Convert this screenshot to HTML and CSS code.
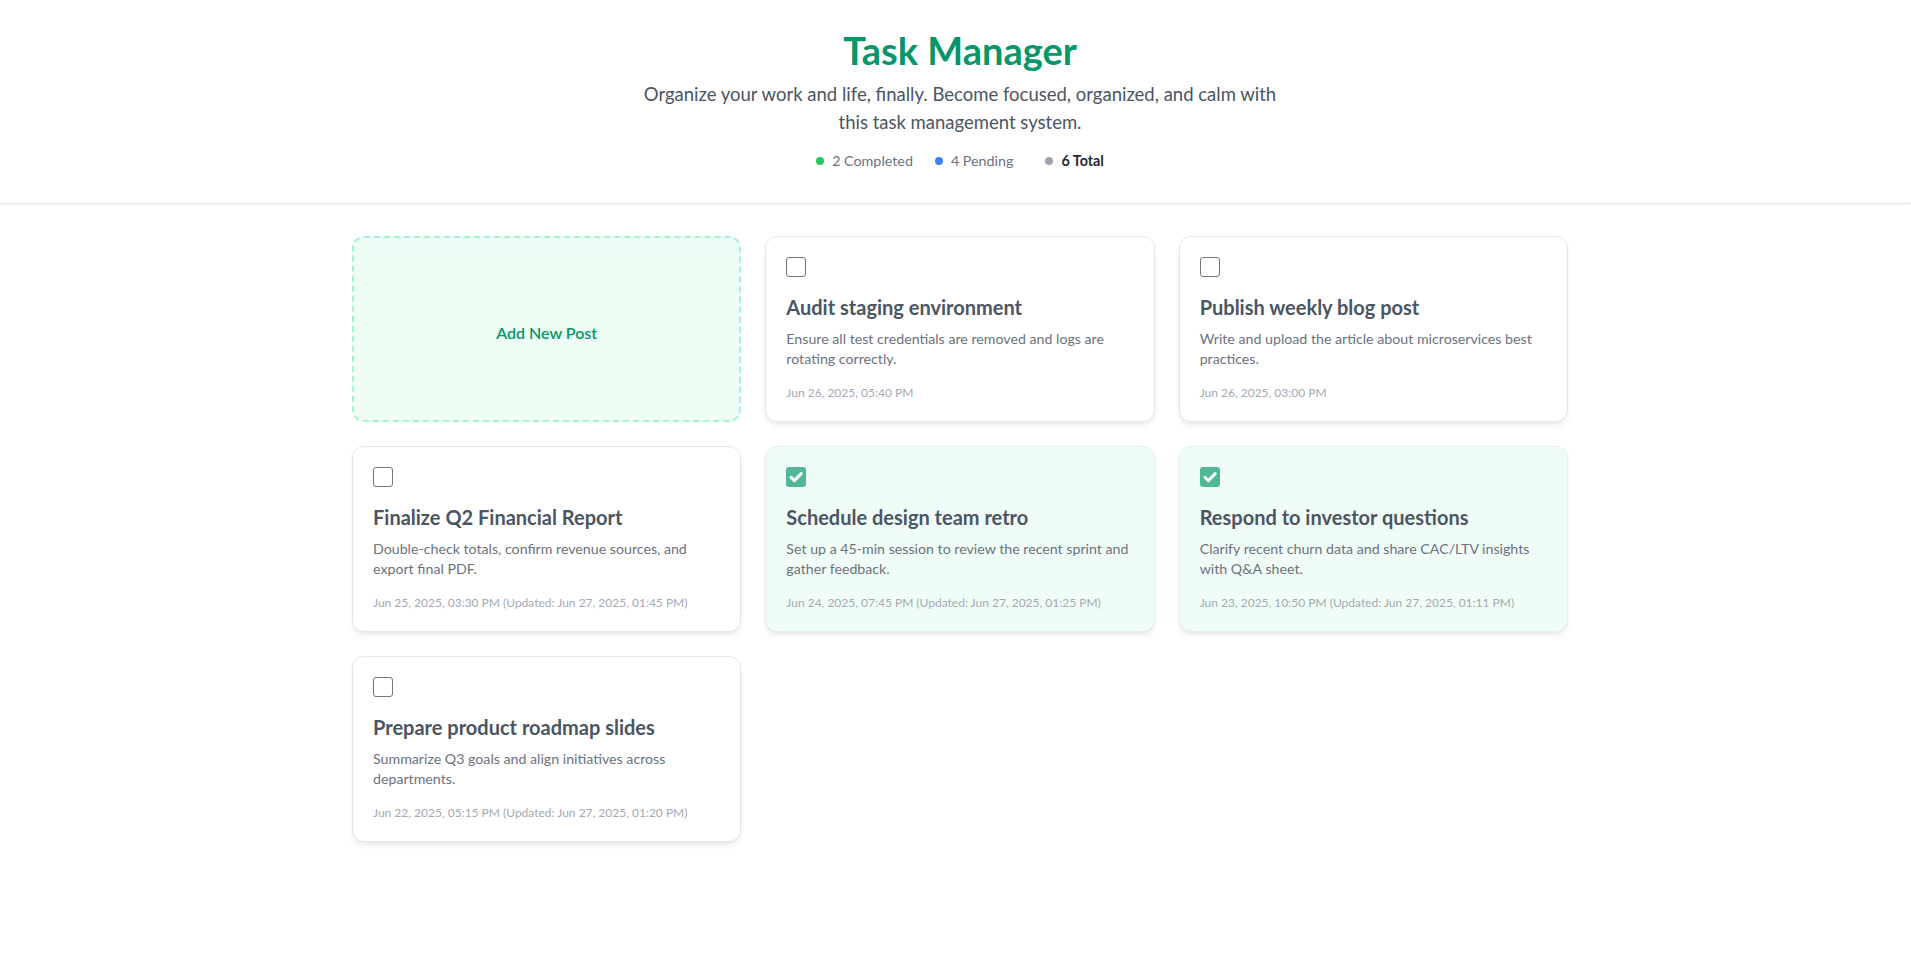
FILE: index.html
```html
<!DOCTYPE html>
<html lang="en">
<head>
<meta charset="utf-8">
<title>Task Manager</title>
<link rel="stylesheet" href="styles.css">
</head>
<body>
<header class="header">
  <div class="header-inner">
    <h1 class="title">Task Manager</h1>
    <p class="subtitle">Organize your work and life, finally. Become focused, organized, and calm with this task management system.</p>
    <div class="stats">
      <span class="stat"><span class="dot dot-green"></span>2 Completed</span>
      <span class="stat"><span class="dot dot-blue"></span>4 Pending</span>
      <span class="stat stat-total"><span class="dot dot-gray"></span>6 Total</span>
    </div>
  </div>
</header>
<main class="main">
  <div class="grid">
    <button class="add-card">Add New Post</button>

    <article class="card">
      <span class="check"></span>
      <h2 class="card-title">Audit staging environment</h2>
      <p class="card-desc">Ensure all test credentials are removed and logs are rotating correctly.</p>
      <p class="card-date">Jun 26, 2025, 05:40 PM</p>
    </article>

    <article class="card">
      <span class="check"></span>
      <h2 class="card-title">Publish weekly blog post</h2>
      <p class="card-desc">Write and upload the article about microservices best practices.</p>
      <p class="card-date">Jun 26, 2025, 03:00 PM</p>
    </article>

    <article class="card">
      <span class="check"></span>
      <h2 class="card-title">Finalize Q2 Financial Report</h2>
      <p class="card-desc">Double-check totals, confirm revenue sources, and export final PDF.</p>
      <p class="card-date">Jun 25, 2025, 03:30 PM (Updated: Jun 27, 2025, 01:45 PM)</p>
    </article>

    <article class="card card-done">
      <span class="check check-on"><svg viewBox="0 0 20 20" width="20" height="20"><path d="M5 10.3l3.3 3.3L15.2 6.6" fill="none" stroke="#fff" stroke-width="3" stroke-linecap="round" stroke-linejoin="round"/></svg></span>
      <h2 class="card-title">Schedule design team retro</h2>
      <p class="card-desc">Set up a 45-min session to review the recent sprint and gather feedback.</p>
      <p class="card-date">Jun 24, 2025, 07:45 PM (Updated: Jun 27, 2025, 01:25 PM)</p>
    </article>

    <article class="card card-done">
      <span class="check check-on"><svg viewBox="0 0 20 20" width="20" height="20"><path d="M5 10.3l3.3 3.3L15.2 6.6" fill="none" stroke="#fff" stroke-width="3" stroke-linecap="round" stroke-linejoin="round"/></svg></span>
      <h2 class="card-title">Respond to investor questions</h2>
      <p class="card-desc">Clarify recent churn data and share CAC/LTV insights with Q&amp;A sheet.</p>
      <p class="card-date">Jun 23, 2025, 10:50 PM (Updated: Jun 27, 2025, 01:11 PM)</p>
    </article>

    <article class="card">
      <span class="check"></span>
      <h2 class="card-title">Prepare product roadmap slides</h2>
      <p class="card-desc">Summarize Q3 goals and align initiatives across departments.</p>
      <p class="card-date">Jun 22, 2025, 05:15 PM (Updated: Jun 27, 2025, 01:20 PM)</p>
    </article>
  </div>
</main>
</body>
</html>
```

FILE: styles.css
```css
* { box-sizing: border-box; }

body {
  margin: 0;
  background: #ffffff;
  font-family: "Lato", "Noto Sans", sans-serif;
  color: #374151;
}

.header {
  background: #ffffff;
  border-bottom: 1px solid #e5e7eb;
  box-shadow: 0 1px 2px rgba(0, 0, 0, 0.05);
}

.header-inner {
  padding: 30px 0 32px 9px;
  display: flex;
  flex-direction: column;
  align-items: center;
  text-align: center;
}

.title {
  margin: 0;
  font-size: 38px;
  line-height: 40px;
  font-weight: 700;
  color: #059669;
}

.subtitle {
  margin: 10px 0 0;
  max-width: 655px;
  font-size: 18.5px;
  line-height: 28px;
  color: #4b5563;
}

.stats {
  margin-top: 15px;
  display: flex;
  align-items: center;
  gap: 22px;
  font-size: 14.3px;
  line-height: 20px;
  color: #6b7280;
}

.stat {
  display: flex;
  align-items: center;
  gap: 8px;
}

.stat-total {
  margin-left: 10px;
  font-weight: 700;
  color: #1f2937;
}

.dot {
  width: 8px;
  height: 8px;
  border-radius: 50%;
}
.dot-green { background: #22c55e; }
.dot-blue { background: #3b82f6; }
.dot-gray { background: #9ca3af; }

.main {
  padding: 32px 0 32px 9px;
}

.grid {
  max-width: 1216px;
  margin: 0 auto;
  display: grid;
  grid-template-columns: repeat(3, 1fr);
  gap: 24px;
}

.add-card {
  display: flex;
  align-items: center;
  justify-content: center;
  padding-top: 8px;
  border: 2px dashed #a7f3d0;
  border-radius: 12px;
  background: linear-gradient(180deg, #ecfdf5, #f0fdf4);
  font-family: inherit;
  font-size: 16px;
  font-weight: 600;
  color: #059669;
  cursor: pointer;
}

.card {
  background: #ffffff;
  border: 1px solid #e5e7eb;
  border-radius: 12px;
  padding: 20px;
  box-shadow: 0 4px 6px -1px rgba(0, 0, 0, 0.08), 0 2px 4px -2px rgba(0, 0, 0, 0.06);
}

.card-done {
  background: #f0fdf7;
  border-color: #e3f1ec;
}

.check {
  display: block;
  width: 20px;
  height: 20px;
  border: 1px solid #767676;
  border-radius: 3px;
  background: #fff;
}

.check-on {
  border: none;
  background: #50b894;
}

.check-on svg { display: block; }

.card-title {
  margin: 16px 0 0;
  font-size: 20px;
  line-height: 28px;
  font-weight: 700;
  color: #4b5563;
}

.card-desc {
  margin: 8px 0 0;
  font-size: 14.2px;
  line-height: 20px;
  color: #6b7280;
}

.card-date {
  margin: 16px 0 0;
  font-size: 12px;
  line-height: 16px;
  color: #a4a9b3;
}
```
